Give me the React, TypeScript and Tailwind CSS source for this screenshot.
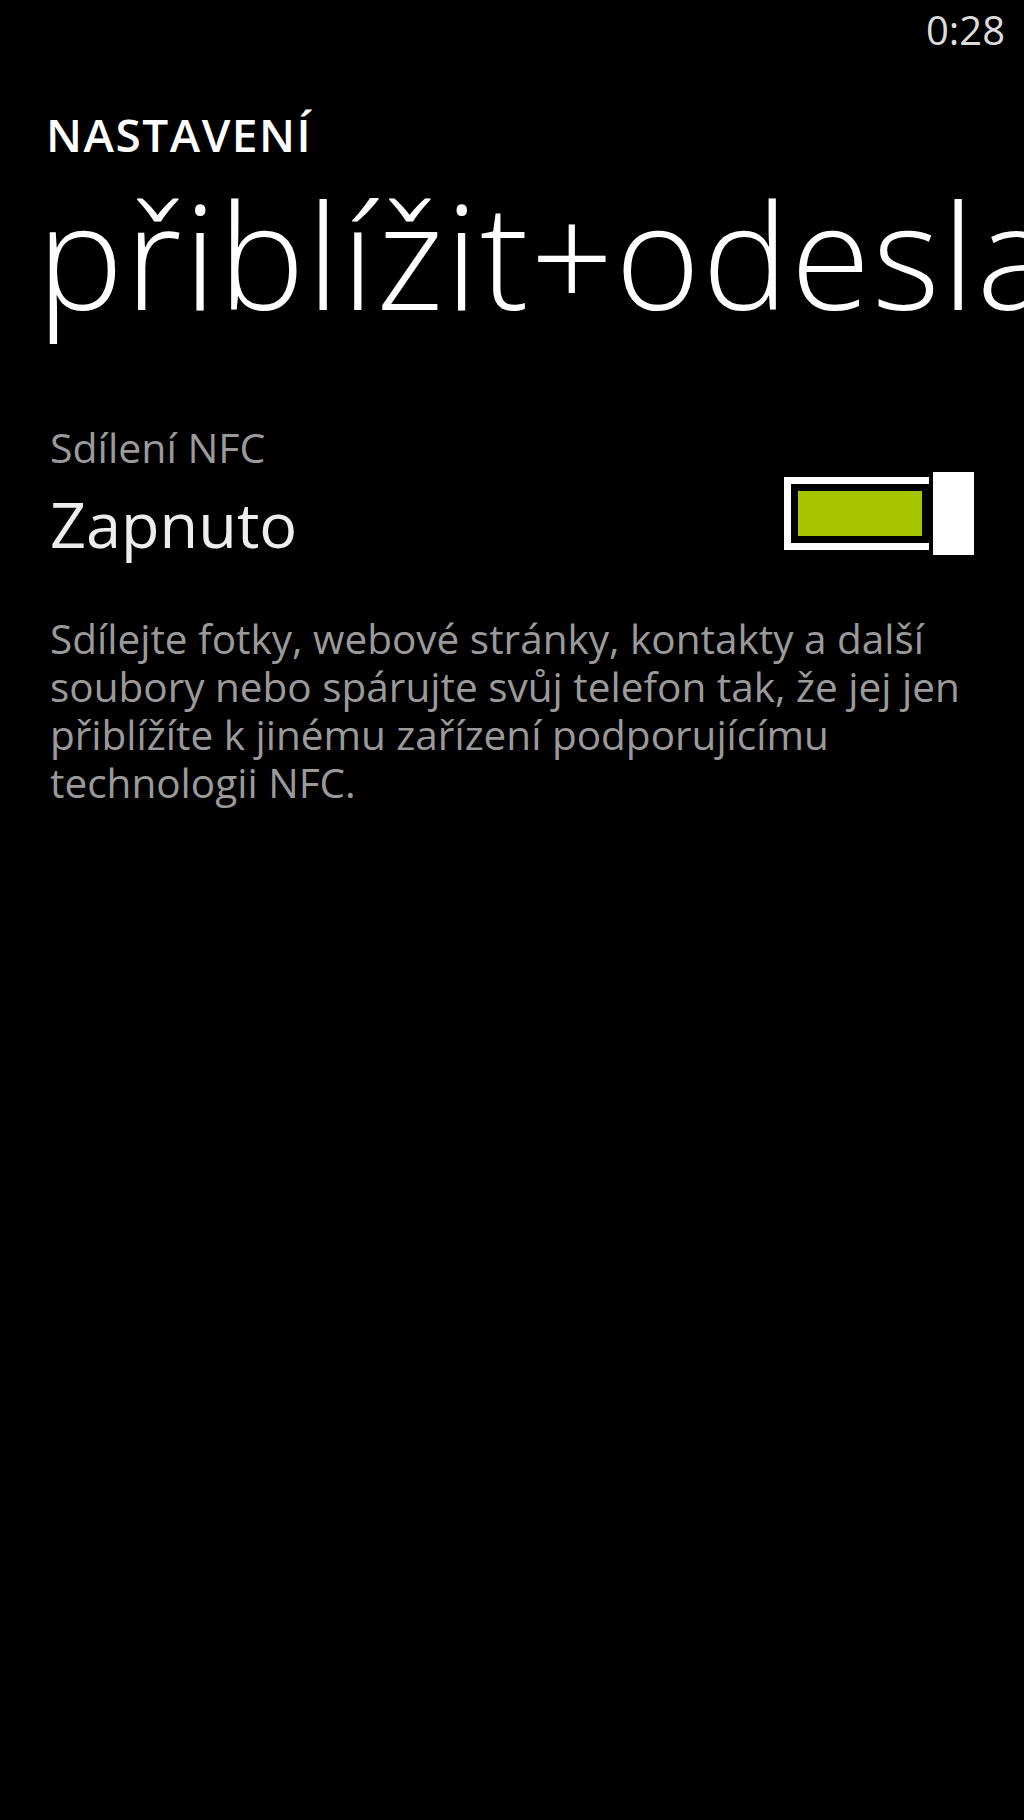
import React from "react";

export default function App() {
  return (
    <div className="w-full h-[1820px] bg-black overflow-hidden whitespace-nowrap font-['Open_Sans',_'Noto_Sans',_sans-serif]">
      <div className="pt-[10px] pr-[19px] text-right text-[40px] leading-none text-[#dcdcdc]">0:28</div>

      <div className="mt-[61px] pl-[46px] text-[46px] leading-none font-semibold tracking-[1.5px] text-white">NASTAVENÍ</div>

      <div className="mt-[24px] pl-[37px] text-[145px] leading-none font-light tracking-[2px] text-white">přiblížit+odeslat</div>

      <div className="mt-[101px] pl-[50px] text-[41px] leading-none text-[#9a9a9a]">Sdílení NFC</div>

      <div className="flex items-start justify-between pr-[46px]">
        <div className="mt-[24px] pl-[50px] text-[63px] leading-none text-[#ededed]">Zapnuto</div>
        <div className="relative w-[194px] h-[91px] pt-[9px]">
          <div className="w-[152px] h-[73px] border-[7px] border-white p-[7px]">
            <div className="w-full h-full bg-[#a6c400]" />
          </div>
          <div className="absolute left-[145px] top-0 w-[49px] h-[91px] border-4 border-black bg-white" />
        </div>
      </div>

      <div className="mt-[56px] pl-[50px] text-[40.5px] leading-[48px] text-[#9a9a9a]">
        <div>Sdílejte fotky, webové stránky, kontakty a další</div>
        <div>soubory nebo spárujte svůj telefon tak, že jej jen</div>
        <div>přiblížíte k jinému zařízení podporujícímu</div>
        <div>technologii NFC.</div>
      </div>
    </div>
  );
}
